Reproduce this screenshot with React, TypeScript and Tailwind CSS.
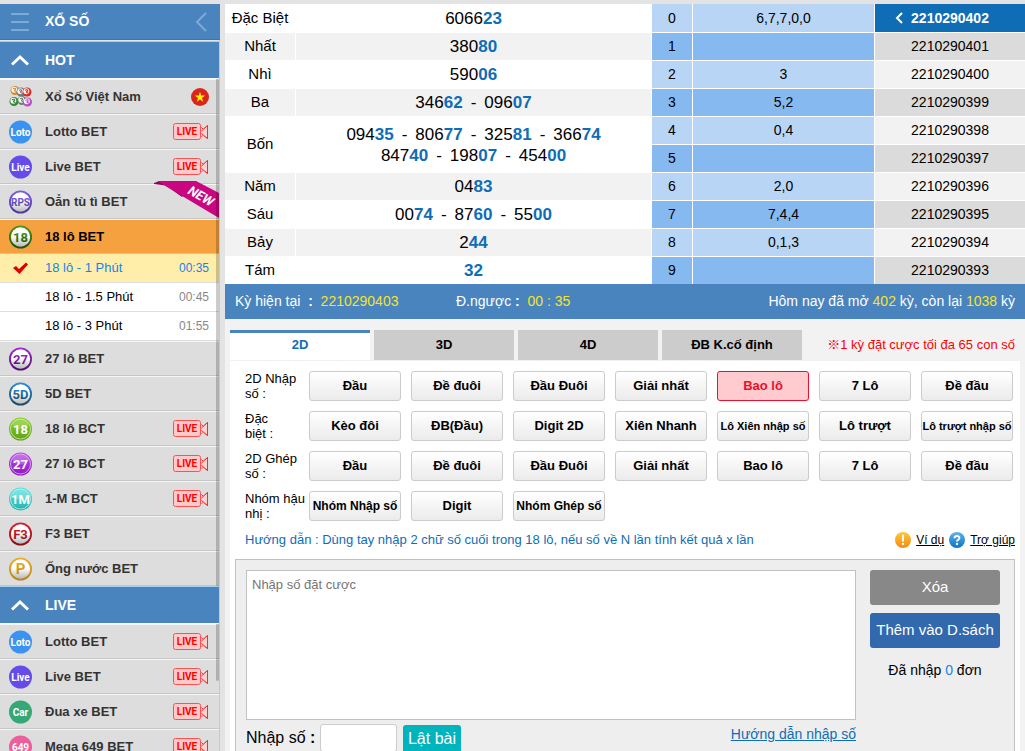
import React from "react";

type BallStyle = "flat" | "ring" | "fill";

interface Ball {
  label: string;
  color: string;
  dark: string;
  style: BallStyle;
}

interface Game {
  name: string;
  ball?: Ball;
  badge?: "live" | "flag" | "new";
}

const balls: Record<string, Ball> = {
  loto: { label: "Loto", color: "#3a93f0", dark: "#3a93f0", style: "flat" },
  live: { label: "Live", color: "#654bea", dark: "#654bea", style: "flat" },
  car: { label: "Car", color: "#35a877", dark: "#35a877", style: "flat" },
  m649: { label: "649", color: "#ea5f9c", dark: "#ea5f9c", style: "flat" },
  rps: { label: "RPS", color: "#7b5fe0", dark: "#4a35a0", style: "ring" },
  g18: { label: "18", color: "#4f9a10", dark: "#1f5008", style: "ring" },
  g27: { label: "27", color: "#a52ad8", dark: "#4f1070", style: "ring" },
  d5: { label: "5D", color: "#2a8ee0", dark: "#17465f", style: "ring" },
  f3: { label: "F3", color: "#dd1f2c", dark: "#8a0d14", style: "ring" },
  pipe: { label: "P", color: "#f0b020", dark: "#b5831a", style: "ring" },
  f18: { label: "18", color: "#8bd02c", dark: "#5fa30f", style: "fill" },
  f27: { label: "27", color: "#bf4be8", dark: "#8d18c0", style: "fill" },
  f1m: { label: "1M", color: "#5fe3df", dark: "#1fb5b0", style: "fill" },
};

const hotTop: Game[] = [
  { name: "Xổ Số Việt Nam", badge: "flag" },
  { name: "Lotto BET", ball: balls.loto, badge: "live" },
  { name: "Live BET", ball: balls.live, badge: "live" },
  { name: "Oẳn tù tì BET", ball: balls.rps, badge: "new" },
];

const hotBottom: Game[] = [
  { name: "27 lô BET", ball: balls.g27 },
  { name: "5D BET", ball: balls.d5 },
  { name: "18 lô BCT", ball: balls.f18, badge: "live" },
  { name: "27 lô BCT", ball: balls.f27, badge: "live" },
  { name: "1-M BCT", ball: balls.f1m, badge: "live" },
  { name: "F3 BET", ball: balls.f3 },
  { name: "Ống nước BET", ball: balls.pipe },
];

const liveGames: Game[] = [
  { name: "Lotto BET", ball: balls.loto, badge: "live" },
  { name: "Live BET", ball: balls.live, badge: "live" },
  { name: "Đua xe BET", ball: balls.car, badge: "live" },
  { name: "Mega 649 BET", ball: balls.m649, badge: "live" },
];

const subGames = [
  { name: "18 lô - 1 Phút", time: "00:35", active: true },
  { name: "18 lô - 1.5 Phút", time: "00:45", active: false },
  { name: "18 lô - 3 Phút", time: "01:55", active: false },
];

const prizes: { label: string; lines: string[][] }[] = [
  { label: "Đặc Biệt", lines: [["606623"]] },
  { label: "Nhất", lines: [["38080"]] },
  { label: "Nhì", lines: [["59006"]] },
  { label: "Ba", lines: [["34662", "09607"]] },
  { label: "Bốn", lines: [["09435", "80677", "32581", "36674"], ["84740", "19807", "45400"]] },
  { label: "Năm", lines: [["0483"]] },
  { label: "Sáu", lines: [["0074", "8760", "5500"]] },
  { label: "Bảy", lines: [["244"]] },
  { label: "Tám", lines: [["32"]] },
];

const tails = ["6,7,7,0,0", "", "3", "5,2", "0,4", "", "2,0", "7,4,4", "0,1,3", ""];

const periods = [
  "2210290402", "2210290401", "2210290400", "2210290399", "2210290398",
  "2210290397", "2210290396", "2210290395", "2210290394", "2210290393",
];

const tabs = ["2D", "3D", "4D", "ĐB K.cố định"];

const betGroups: { label: string; options: string[]; selected?: number }[] = [
  { label: "2D Nhập\nsố :", options: ["Đầu", "Đề đuôi", "Đầu Đuôi", "Giải nhất", "Bao lô", "7 Lô", "Đề đầu"], selected: 4 },
  { label: "Đặc\nbiệt :", options: ["Kèo đôi", "ĐB(Đầu)", "Digit 2D", "Xiên Nhanh", "Lô Xiên nhập số", "Lô trượt", "Lô trượt nhập số"] },
  { label: "2D Ghép\nsố :", options: ["Đầu", "Đề đuôi", "Đầu Đuôi", "Giải nhất", "Bao lô", "7 Lô", "Đề đầu"] },
  { label: "Nhóm hậu\nnhị :", options: ["Nhóm Nhập số", "Digit", "Nhóm Ghép số"] },
];

function BallIcon({ ball, id }: { ball: Ball; id: string }) {
  const { label, color, dark, style } = ball;
  const size = label.length > 2 ? 10 : label.length === 2 ? 13 : 15;
  const ring = style === "ring";
  return (
    <svg width="24" height="24" viewBox="0 0 24 24" aria-hidden="true">
      <defs>
        <linearGradient id={`${id}-edge`} x1="0" y1="0" x2="0" y2="1">
          <stop offset="0" stopColor={color} />
          <stop offset="1" stopColor={dark} />
        </linearGradient>
        <linearGradient id={`${id}-face`} x1="0" y1="0" x2="0" y2="1">
          <stop offset="0.45" stopColor="#fff" />
          <stop offset="1" stopColor="#b9b9b9" />
        </linearGradient>
      </defs>
      <circle cx="12.5" cy="12" r="11.5" fill={`url(#${id}-edge)`} />
      {ring && <circle cx="12.5" cy="12" r="9.7" fill={`url(#${id}-face)`} />}
      {style === "fill" && (
        <>
          <circle cx="12.5" cy="12" r="10" fill="none" stroke="#fff" strokeOpacity="0.55" />
          <ellipse cx="12.5" cy="7.5" rx="8" ry="5" fill="#fff" fillOpacity="0.22" />
        </>
      )}
      <text
        x="12.5"
        y={size > 14 ? 17.4 : size > 12 ? 16.6 : 15.6}
        textAnchor="middle"
        fontFamily="Roboto, sans-serif"
        fontWeight="bold"
        fontSize={size}
        fill={ring ? `url(#${id}-edge)` : "#fff"}
      >
        {label}
      </text>
    </svg>
  );
}

function BallCluster() {
  const items = [
    { x: 7, y: 5.5, c: "#d08a30" },
    { x: 13, y: 7, c: "#777777" },
    { x: 6, y: 16.5, c: "#2f8a30" },
    { x: 14, y: 15.5, c: "#6d7f72" },
    { x: 19.5, y: 17, c: "#b44fc4" },
    { x: 19, y: 7, c: "#dd2a22" },
  ];
  return (
    <svg width="24" height="24" viewBox="0 0 24 24" aria-hidden="true">
      {items.map(({ x, y, c }) => (
        <g key={`${x}-${y}`}>
          <circle cx={x} cy={y} r="4.5" fill={c} />
          <circle cx={x - 0.7} cy={y - 0.7} r="3" fill="#f2f2f2" />
          <path d={`M${x - 2} ${y - 1.7}q3 -1.5 2.6 .8q-2.6 1 .8 2`} fill="none" stroke={c} strokeWidth="1.1" />
        </g>
      ))}
    </svg>
  );
}

function FlagIcon() {
  return (
    <svg width="18" height="18" viewBox="0 0 18 18" aria-hidden="true">
      <circle cx="9" cy="9" r="9" fill="#da251d" />
      <path d="M9 3.8l1.25 3.75h3.95l-3.2 2.35 1.2 3.8L9 11.4l-3.2 2.3 1.2-3.8-3.2-2.35h3.95z" fill="#ffee00" />
    </svg>
  );
}

function LiveBadge() {
  return (
    <svg width="36" height="18" viewBox="0 0 36 18" aria-hidden="true">
      <path d="M28.5 8L34.5 2.5V15.5L28.5 10.5M28.5 4.5L30.5 6.5M28.5 13.5L30.5 12" fill="none" stroke="#f03030" />
      <path d="M28.5 6.5L34 4V14.5L28.5 12Z" fill="#ffd0d0" />
      <path d="M28.5 8L34.5 2.5V15.5L28.5 10.5" fill="none" stroke="#f03030" />
      <rect x="0.5" y="0.5" width="27" height="16" rx="2" fill="#ffc9c9" stroke="#ff5050" />
      <text x="14" y="12" textAnchor="middle" fontFamily="Roboto, sans-serif" fontWeight="bold" fontSize="10" fill="#f00">
        LIVE
      </text>
    </svg>
  );
}

function NewRibbon() {
  return (
    <svg className="pointer-events-none absolute -top-1 right-0" width="65" height="38" viewBox="0 0 65 38" aria-hidden="true">
      <path d="M0 3L6 1H24L36 8L28 17L12 5.5L0 4Z" fill="#8d005b" />
      <path d="M3 1H42L65 13V38Z" fill="#c9057f" />
      <text
        x="47"
        y="20.5"
        textAnchor="middle"
        transform="rotate(30 47 16)"
        fontFamily="Roboto, sans-serif"
        fontWeight="bold"
        fontStyle="italic"
        fontSize="13"
        fill="#fff"
      >
        NEW
      </text>
    </svg>
  );
}

function GameRow({ game, id, active = false }: { game: Game; id: string; active?: boolean }) {
  return (
    <li className="relative">
      <a
        href="#"
        className={`flex h-[35px] items-center border-t border-b border-t-[#f6f6f6] border-b-[#c6c6c6] pr-[10px] pl-2 text-[13px] font-bold ${
          active ? "bg-[#f5a13f] text-black" : "bg-[#dddddd] text-[#333333]"
        }`}
      >
        <span className="flex w-[37px] shrink-0">{game.ball ? <BallIcon ball={game.ball} id={id} /> : <BallCluster />}</span>
        <span className="flex-1">{game.name}</span>
        {game.badge === "live" && <LiveBadge />}
        {game.badge === "flag" && <FlagIcon />}
      </a>
      {game.badge === "new" && <NewRibbon />}
    </li>
  );
}

function SectionHeader({ title }: { title: string }) {
  return (
    <h2 className="relative z-10">
      <button
        type="button"
        className="flex h-[38px] w-full items-center border-t border-b border-t-[#a9cdec] border-b-[#f6f6f6] bg-[#4984bf] pl-[11px] text-[14px] font-bold text-white"
      >
        <svg width="18" height="12" viewBox="0 0 18 12" fill="none" stroke="#fff" strokeWidth="3" aria-hidden="true">
          <path d="M1 10.5L9 3L17 10.5" />
        </svg>
        <span className="pl-4">{title}</span>
      </button>
    </h2>
  );
}

function Sidebar() {
  return (
    <aside className="flex w-[220px] shrink-0 flex-col border-r border-[#c8c8c8]">
      <div className="-mr-px flex h-9 shrink-0 items-center border-b border-[#3c74b0] bg-[#4984bf] pr-3 pl-[11px] text-white">
        <button type="button" aria-label="Menu">
          <svg width="18" height="18" viewBox="0 0 18 18" stroke="#7faad6" strokeWidth="2" aria-hidden="true">
            <path d="M0 1H18M0 9H18M0 17H18" />
          </svg>
        </button>
        <h1 className="flex-1 pl-4 text-[14px] font-bold">XỔ SỐ</h1>
        <button type="button" aria-label="Thu gọn">
          <svg width="14" height="20" viewBox="0 0 14 20" fill="none" stroke="#7faad6" strokeWidth="2" aria-hidden="true">
            <path d="M12 1L3 10L12 19" />
          </svg>
        </button>
      </div>
      <div className="relative isolate mt-px min-h-0 flex-1">
        <div className="absolute top-[38px] right-0 z-[5] h-[602px] w-[3px] rounded-b bg-black/20" />
        <nav className="h-full overflow-y-auto [scrollbar-width:none]">
          <SectionHeader title="HOT" />
          <ul>
            {hotTop.map((g, i) => (
              <GameRow key={g.name} game={g} id={`ht${i}`} />
            ))}
            <GameRow game={{ name: "18 lô BET", ball: balls.g18 }} id="cur" active />
            {subGames.map((s) => (
              <li key={s.name}>
                <a
                  href="#"
                  className={`flex h-[29px] items-center border-b border-[#dedede] pr-[10px] pl-[12px] text-[13px] ${
                    s.active ? "bg-[#ffeeaa] text-[#1782ee]" : "bg-white text-black"
                  }`}
                >
                  <span className="w-[33px] shrink-0">
                    {s.active && (
                      <svg width="17" height="12" viewBox="0 0 17 12" aria-hidden="true">
                        <path d="M1 6L4 4L7 7L14 0.5L16 2.5L7.5 12Z" fill="#e00000" />
                      </svg>
                    )}
                  </span>
                  <span className="flex-1">{s.name}</span>
                  <span className={s.active ? "text-[12px] text-[#1782ee]" : "text-[12px] text-[#888888]"}>{s.time}</span>
                </a>
              </li>
            ))}
            {hotBottom.map((g, i) => (
              <GameRow key={g.name} game={g} id={`hb${i}`} />
            ))}
          </ul>
          <SectionHeader title="LIVE" />
          <ul>
            {liveGames.map((g, i) => (
              <GameRow key={g.name} game={g} id={`lv${i}`} />
            ))}
          </ul>
        </nav>
      </div>
    </aside>
  );
}

function DrawNumber({ value }: { value: string }) {
  return (
    <span>
      {value.slice(0, -2)}
      <b className="text-[#0f6db6]">{value.slice(-2)}</b>
    </span>
  );
}

function ResultBoard() {
  return (
    <section className="flex shrink-0 bg-white text-black">
      <table className="flex-1 border-separate border-spacing-0">
        <tbody>
          {prizes.map((p, i) => {
            const line = i > 0 ? "border-t border-r border-white" : "border-r border-white";
            return (
              <tr key={p.label} className={i % 2 ? "bg-[#f2f2f2]" : "bg-white"}>
                <th className={`w-[71px] p-0 text-[15px] font-normal ${line} ${p.lines.length > 1 ? "h-14" : "h-7"}`}>{p.label}</th>
                <td className={`p-0 text-[17px] leading-[21px] ${line}`}>
                  {p.lines.map((numbers, j) => (
                    <div key={j} className="flex justify-center gap-2">
                      {numbers.map((n, k) => (
                        <React.Fragment key={n}>
                          {k > 0 && <span>-</span>}
                          <DrawNumber value={n} />
                        </React.Fragment>
                      ))}
                    </div>
                  ))}
                </td>
              </tr>
            );
          })}
        </tbody>
      </table>
      <table className="w-[223px] border-separate border-spacing-0 text-center text-[14px]">
        <tbody>
          {tails.map((t, i) => {
            const line = i > 0 ? "border-t border-r border-white" : "border-r border-white";
            return (
              <tr key={i} className={i % 2 ? "bg-[#87b9f1]" : "bg-[#b8d5f5]"}>
                <th className={`h-7 w-[41px] p-0 font-normal ${line}`}>{i}</th>
                <td className={`p-0 ${line}`}>{t}</td>
              </tr>
            );
          })}
        </tbody>
      </table>
      <ul className="w-[150px] text-[14px]">
        {periods.map((p, i) => (
          <li key={p}>
            <button
              type="button"
              className={`relative flex h-7 w-full items-center justify-center ${
                i === 0
                  ? "bg-[#0f6db6] font-bold text-white"
                  : i % 2
                    ? "border-t border-white bg-[#dbdbdb]"
                    : "border-t border-white bg-[#f2f2f2]"
              }`}
            >
              {i === 0 && (
                <svg className="absolute left-5" width="8" height="12" viewBox="0 0 8 12" fill="none" stroke="#fff" strokeWidth="2" aria-hidden="true">
                  <path d="M7 1L2 6L7 11" />
                </svg>
              )}
              {p}
            </button>
          </li>
        ))}
      </ul>
    </section>
  );
}

function StatusBar() {
  return (
    <div className="flex h-[35px] shrink-0 items-center bg-[#4984bf] px-[10px] text-[14px] text-white">
      <p className="w-[221px]">
        Kỳ hiện tại &nbsp;<b>:</b>&nbsp; <span className="text-[#f4e527]">2210290403</span>
      </p>
      <p className="flex-1">
        Đ.ngược <b>:</b>&nbsp; <span className="text-[#f4e527]">00 : 35</span>
      </p>
      <p>
        Hôm nay đã mở <span className="text-[#f4e527]">402</span> kỳ, còn lại <span className="text-[#f4e527]">1038</span> kỳ
      </p>
    </div>
  );
}

function optionSize(text: string) {
  if (text.length > 13) return "text-[11px]";
  if (text.length > 11) return "text-[12px]";
  return "text-[13px]";
}

function BetPanel() {
  return (
    <section className="flex-1 px-[5px] pt-[11px]">
      <div className="flex items-center">
        <div role="tablist" className="flex gap-1">
          {tabs.map((t, i) => (
            <button
              key={t}
              type="button"
              role="tab"
              aria-selected={i === 0}
              className={`h-[30px] w-[140px] text-[13px] font-bold ${
                i === 0 ? "border-t-[3px] border-[#4984bf] bg-white pb-[3px] text-[#0f6db6]" : "bg-[#cccccc] text-black"
              }`}
            >
              {t}
            </button>
          ))}
        </div>
        <p className="flex-1 pr-[5px] text-right text-[13px] text-[#f00]">※1 kỳ đặt cược tối đa 65 con số</p>
      </div>
      <div className="mt-px bg-white px-[5px] pt-[10px]">
        <div className="flex flex-col gap-[10px] pr-0.5 pl-[10px]">
          {betGroups.map((g) => (
            <div key={g.label} className="flex h-[30px] items-center">
              <span className="w-16 shrink-0 text-[13px] leading-[15px] whitespace-pre-line">{g.label}</span>
              <div className="grid flex-1 grid-cols-7 gap-[10px]">
                {g.options.map((o, i) => (
                  <button
                    key={o}
                    type="button"
                    className={`h-[30px] rounded-[3px] border font-bold whitespace-nowrap ${optionSize(o)} ${
                      g.selected === i
                        ? "border-[#ea0f2d] bg-[#ffcbcf] text-[#ea0f2d]"
                        : "border-[#cccccc] bg-linear-to-b from-white to-[#ebebeb] text-black"
                    }`}
                  >
                    {o}
                  </button>
                ))}
              </div>
            </div>
          ))}
        </div>
        <div className="flex h-[38px] items-center pl-[10px] text-[13px]">
          <p className="flex-1 text-[#0f6db6]">Hướng dẫn : Dùng tay nhập 2 chữ số cuối trong 18 lô, nếu số về N lần tính kết quả x lần</p>
          <a href="#" className="flex items-center gap-[5px] text-[12px]">
            <svg width="16" height="16" viewBox="0 0 16 16" aria-hidden="true">
              <defs>
                <linearGradient id="warn" x1="0" y1="0" x2="0" y2="1">
                  <stop offset="0" stopColor="#fdc83c" />
                  <stop offset="1" stopColor="#f28a12" />
                </linearGradient>
              </defs>
              <circle cx="8" cy="8" r="8" fill="url(#warn)" />
              <path d="M8 3.5V8.8" stroke="#fff" strokeWidth="2" strokeLinecap="round" />
              <circle cx="8" cy="12" r="1.2" fill="#fff" />
            </svg>
            <span className="underline">Ví dụ</span>
          </a>
          <a href="#" className="ml-[5px] flex items-center gap-[5px] text-[12px]">
            <svg width="16" height="16" viewBox="0 0 16 16" aria-hidden="true">
              <defs>
                <linearGradient id="help" x1="0" y1="0" x2="0" y2="1">
                  <stop offset="0" stopColor="#62b2ea" />
                  <stop offset="1" stopColor="#0b74c4" />
                </linearGradient>
              </defs>
              <circle cx="8" cy="8" r="8" fill="url(#help)" />
              <path d="M5.6 6.2C5.6 3.2 10.4 3.3 10.4 6C10.4 7.8 8 7.6 8 9.6" fill="none" stroke="#fff" strokeWidth="2" />
              <circle cx="8" cy="12" r="1.2" fill="#fff" />
            </svg>
            <span className="underline">Trợ giúp</span>
          </a>
        </div>
        <div className="flex gap-[14px] border border-[#c1c1c1] bg-[#eeeeee] py-[10px] pr-[14px] pl-[10px]">
          <div className="flex-1">
            <textarea
              aria-label="Nhập số đặt cược"
              placeholder="Nhập số đặt cược"
              className="block h-[150px] w-full resize-none border border-[#c1c1c1] bg-white px-[5px] py-1 text-[13px] placeholder:text-[#757575]"
            />
            <div className="flex items-start pt-1">
              <label htmlFor="pick" className="w-[74px] pt-[2px] text-[16px]">
                Nhập số <b>:</b>
              </label>
              <input id="pick" className="h-7 w-[77px] rounded-[3px] border border-[#cccccc] bg-white px-1" />
              <button type="button" className="mt-px ml-[6px] h-7 w-[58px] rounded-[3px] bg-[#00b4bd] text-[16px] text-white">
                Lật bài
              </button>
              <a href="#" className="ml-auto text-[14px] text-[#0f6db6] underline">
                Hướng dẫn nhập số
              </a>
            </div>
          </div>
          <div className="w-[130px] text-center">
            <button type="button" className="mb-2 block h-[35px] w-full rounded-[3px] bg-[#888888] text-[15px] text-white">
              Xóa
            </button>
            <button type="button" className="block h-[35px] w-full rounded-[3px] bg-[#3269ae] text-[15px] text-white">
              Thêm vào D.sách
            </button>
            <p className="pt-3 text-[14px]">
              Đã nhập <span className="text-[#1782ee]">0</span> đơn
            </p>
          </div>
        </div>
      </div>
    </section>
  );
}

export default function App() {
  return (
    <div className="flex h-screen gap-[5px] overflow-hidden bg-[#e3e3e3] pt-1 font-['Liberation_Sans','Noto_Sans_CJK_JP',sans-serif]">
      <Sidebar />
      <main className="flex min-w-0 flex-1 flex-col overflow-y-auto bg-[#f2f2f2] [scrollbar-width:none]">
        <ResultBoard />
        <StatusBar />
        <BetPanel />
      </main>
    </div>
  );
}
